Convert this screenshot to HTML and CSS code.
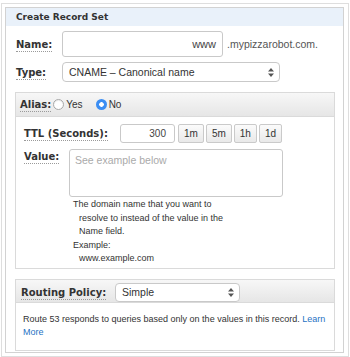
FILE: index.html
```html
<!DOCTYPE html>
<html>
<head>
<meta charset="utf-8">
<link rel="stylesheet" href="styles.css">
</head>
<body>
<div class="frame">
  <div class="panel">
    <div class="panel-title">Create Record Set</div>
    <div class="panel-body">
      <div class="row row-name">
        <span class="label lbl-main"><span class="dotted">Name:</span></span>
        <div class="field name-input">www</div>
        <span class="suffix">.mypizzarobot.com.</span>
      </div>
      <div class="row row-type">
        <span class="label lbl-main"><span class="dotted">Type:</span></span>
        <div class="select type-select">
          <span class="select-text">CNAME – Canonical name</span>
          <svg class="arrows" width="6" height="9" viewBox="0 0 6 9"><path d="M0 3.5 L3 0 L6 3.5 Z M0 5.5 L3 9 L6 5.5 Z" fill="#555"/></svg>
        </div>
      </div>

      <div class="box alias-box">
        <div class="box-head alias-head">
          <span class="label"><span class="dotted">Alias:</span></span>
          <span class="radio"><span class="radio-dot"></span>Yes</span>
          <span class="radio"><span class="radio-dot on"></span>No</span>
        </div>
        <div class="box-body alias-body">
          <div class="row row-ttl">
            <span class="label lbl-ttl"><span class="dotted">TTL (Seconds):</span></span>
            <div class="field ttl-input">300</div>
            <div class="btns">
              <span class="btn">1m</span>
              <span class="btn">5m</span>
              <span class="btn">1h</span>
              <span class="btn">1d</span>
            </div>
          </div>
          <div class="row row-value">
            <span class="label lbl-value"><span class="dotted">Value:</span></span>
            <div class="value-col">
              <div class="textarea">See example below</div>
              <div class="help">
                <div class="hang">The domain name that you want to resolve to instead of the value in the Name field.</div>
                <div>Example:</div>
                <div class="indent">www.example.com</div>
              </div>
            </div>
          </div>
        </div>
      </div>

      <div class="box routing-box">
        <div class="box-head routing-head">
          <span class="label lbl-routing"><span class="dotted">Routing Policy:</span></span>
          <div class="select routing-select">
            <span class="select-text">Simple</span>
            <svg class="arrows" width="6" height="9" viewBox="0 0 6 9"><path d="M0 3.5 L3 0 L6 3.5 Z M0 5.5 L3 9 L6 5.5 Z" fill="#555"/></svg>
          </div>
        </div>
        <div class="box-body routing-body">
          Route 53 responds to queries based only on the values in this record. <a class="link" href="#">Learn More</a>
        </div>
      </div>
    </div>
  </div>
</div>
</body>
</html>
```

FILE: styles.css
```css
* { box-sizing: border-box; }
html, body { margin: 0; padding: 0; background: #fff; }
body {
  font-family: "Liberation Sans", Arial, sans-serif;
  font-size: 10.5px;
  color: #333;
  width: 350px;
  height: 357px;
  overflow: hidden;
}
.frame {
  margin: 3px 0 0 1px;
  width: 348px;
  height: 354px;
  border: 1px solid #dedede;
  padding: 3px 4px 2px 3px;
}
.panel {
  border: 1px solid #d2d2d2;
  height: 346px;
}
.panel-title {
  height: 18px;
  line-height: 18px;
  padding-left: 10px;
  background: #e9f1fa;
  font-family: "DejaVu Sans", Verdana, sans-serif;
  font-weight: bold;
  font-size: 9px;
  color: #333;
}
.panel-body {
  padding: 0 8px 0 9px;
}
.row {
  display: flex;
  align-items: center;
}
.label {
  font-family: "DejaVu Sans", Verdana, sans-serif;
  font-weight: bold;
  font-size: 10px;
  color: #333;
  flex: none;
}
.dotted {
  border-bottom: 1px dotted #9a9a9a;
  padding-bottom: 1px;
}
.lbl-main { width: 46px; margin-left: 1px; }
.row-name { margin-top: 5px; height: 26px; }
.row-type { margin-top: 5px; height: 20px; }

.field {
  border: 1px solid #c9c9c9;
  border-radius: 3px;
  background: #fff;
  text-align: right;
  color: #444;
}
.name-input {
  width: 161px;
  height: 26px;
  line-height: 24px;
  padding-right: 6px;
  font-size: 11px;
}
.suffix {
  margin-left: 4px;
  color: #555;
  font-size: 10.5px;
}
.select {
  display: flex;
  align-items: center;
  justify-content: space-between;
  border: 1px solid #c9c9c9;
  border-radius: 4px;
  background: #fff;
  color: #333;
}
.type-select {
  width: 218px;
  height: 20px;
  padding: 0 5px 0 6px;
}
.arrows { flex: none; }

.box {
  border: 1px solid #dadada;
  background: #fff;
}
.alias-box { margin-top: 10px; }
.box-head {
  display: flex;
  align-items: center;
  background: linear-gradient(#f7f7f7, #e6e6e6);
  border-bottom: 1px solid #dadada;
}
.alias-head {
  height: 24px;
  padding-left: 4px;
}
.radio {
  display: flex;
  align-items: center;
  font-size: 10px;
  color: #333;
}
.radio-dot {
  width: 11px;
  height: 11px;
  border-radius: 50%;
  border: 1px solid #a8a8a8;
  background: #fff;
  margin: 0 2px 0 2px;
  box-shadow: inset 0 1px 1px rgba(0,0,0,0.08);
}
.radio + .radio { margin-left: 11px; }
.radio-dot.on {
  border: none;
  background: radial-gradient(circle, #fff 0 2px, #3c8ef3 2.6px);
  box-shadow: none;
}

.alias-body {
  padding: 7px 8px 2px 8px;
}
.row-ttl { height: 19px; }
.lbl-ttl { width: 96px; }
.ttl-input {
  width: 55px;
  height: 19px;
  line-height: 17px;
  padding-right: 8px;
  font-size: 10px;
}
.btns {
  display: flex;
  gap: 2px;
  margin-left: 3px;
}
.btn {
  height: 19px;
  line-height: 17px;
  padding: 0 5px;
  border: 1px solid #cacaca;
  border-radius: 2px;
  background: linear-gradient(#fbfbfb, #e9e9e9);
  font-size: 10px;
  color: #333;
  min-width: 23px;
  text-align: center;
}
.row-value {
  margin-top: 6px;
  align-items: flex-start;
}
.lbl-value { width: 45px; padding-top: 2px; }
.textarea {
  width: 214px;
  height: 48px;
  border: 1px solid #c9c9c9;
  border-radius: 3px;
  padding: 4px 5px;
  color: #aaa;
  font-size: 10.5px;
}
.help {
  width: 162px;
  margin: 1px 0 0 4px;
  font-size: 9px;
  line-height: 13.5px;
  color: #333;
}
.hang {
  padding-left: 6px;
  text-indent: -6px;
}
.indent { padding-left: 6px; }

.routing-box { margin-top: 10px; }
.routing-head {
  height: 23px;
  padding-left: 5px;
  align-items: flex-start;
  padding-top: 3px;
}
.lbl-routing { width: 94px; padding-top: 4px; }
.routing-select {
  width: 125px;
  height: 19px;
  padding: 0 5px 0 6px;
  font-size: 10.5px;
}
.routing-body {
  padding: 10px 5px 11px 7px;
  font-size: 9px;
  line-height: 13px;
  color: #333;
}
.link {
  color: #1f73c4;
  text-decoration: none;
}
```
